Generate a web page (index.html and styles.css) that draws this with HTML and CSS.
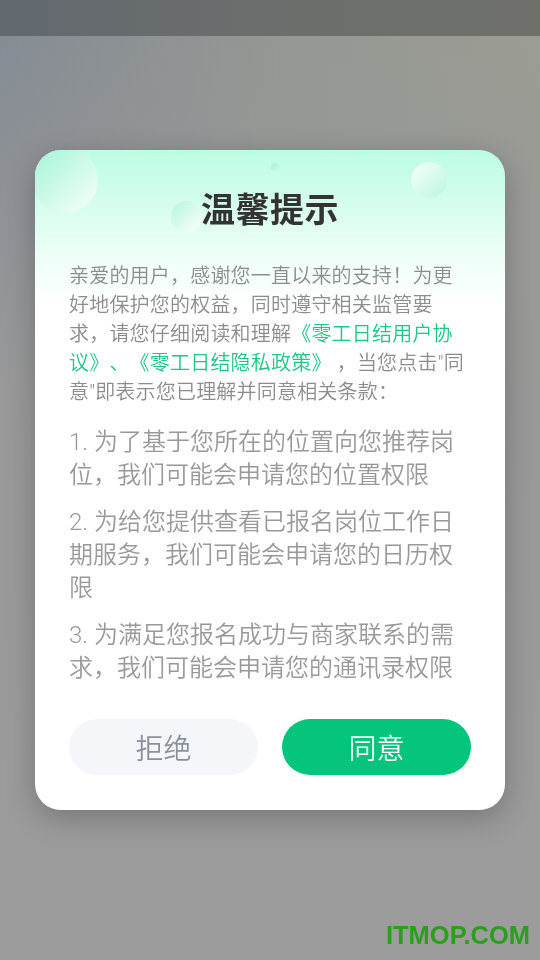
FILE: index.html
```html
<!DOCTYPE html>
<html lang="zh-CN">
<head>
  <meta charset="UTF-8" />
  <meta name="viewport" content="width=device-width, initial-scale=1.0" />
  <title>温馨提示</title>
  <link rel="stylesheet" href="styles.css">
</head>
<body>
  <div class="status-bar"></div>
  <div class="page"></div>

  <div class="mask">
    <div class="dialog">
      <span class="bubble bubble-lg"></span>
      <span class="bubble bubble-md"></span>
      <span class="bubble bubble-xs"></span>
      <span class="bubble bubble-rt"></span>

      <h1 class="dialog-title">温馨提示</h1>

      <p class="intro">亲爱的用户，感谢您一直以来的支持！为更好地保护您的权益，同时遵守相关监管要求，请您仔细阅读和理解<span class="link">《零工日结用户协</span><span class="link">议》、《零工日结隐私政策》</span> ，当您点击"同意"即表示您已理解并同意相关条款：</p>

      <ul class="terms">
        <li>1. 为了基于您所在的位置向您推荐岗位，我们可能会申请您的位置权限</li>
        <li>2. 为给您提供查看已报名岗位工作日期服务，我们可能会申请您的日历权限</li>
        <li>3. 为满足您报名成功与商家联系的需求，我们可能会申请您的通讯录权限</li>
      </ul>

      <div class="actions">
        <button class="btn btn-reject">拒绝</button>
        <button class="btn btn-agree">同意</button>
      </div>
    </div>
  </div>

  <div class="watermark">ITMOP.COM</div>
</body>
</html>
```

FILE: styles.css
```css
body {
  margin: 0;
  padding: 0;
  width: 540px;
  height: 960px;
  overflow: hidden;
  font-family: Roboto, "Noto Sans CJK SC", sans-serif;
  background-color: #9a9a9a;
}

.status-bar {
  height: 36px;
  background: linear-gradient(to right, #62696f, #6b6e6c 50%, #6f706a);
}

.page {
  height: 924px;
  background:
    linear-gradient(to bottom, rgba(154, 154, 154, 0) 0, #999999 360px, #9c9c9c 924px),
    linear-gradient(to right, #858c94, #959893 55%, #9b9c93);
}

.mask {
  position: fixed;
  top: 0;
  left: 0;
  right: 0;
  bottom: 0;
  display: flex;
  align-items: center;
  justify-content: center;
}

.dialog {
  position: relative;
  overflow: hidden;
  box-sizing: border-box;
  width: 470px;
  height: 660px;
  padding: 36px 34px 35px;
  border-radius: 26px;
  background: linear-gradient(to bottom, #bcfde2 0, #d6fded 55px, #effef8 110px, #ffffff 160px);
  box-shadow: 0 8px 30px rgba(0, 0, 0, 0.24);
}

.bubble {
  position: absolute;
  border-radius: 50%;
  background: linear-gradient(135deg, #a2f4d5, rgba(255, 255, 255, 0.85));
}

.bubble-lg {
  left: -3px;
  top: -3px;
  width: 66px;
  height: 66px;
}

.bubble-md {
  left: 136px;
  top: 51px;
  width: 31px;
  height: 31px;
  background: linear-gradient(135deg, #b4f6dd, rgba(255, 255, 255, 0.9));
}

.bubble-xs {
  left: 236px;
  top: 13px;
  width: 9px;
  height: 9px;
  background: linear-gradient(135deg, #9ff3d4, #d4fbec);
}

.bubble-rt {
  left: 376px;
  top: 12px;
  width: 36px;
  height: 36px;
  background: linear-gradient(135deg, rgba(255, 255, 255, 0.9), #b7f7de);
}

.dialog-title {
  position: relative;
  margin: 0 0 28px;
  font-size: 34px;
  line-height: 48px;
  font-weight: 700;
  text-align: center;
  color: #333333;
  letter-spacing: 0.5px;
}

.intro {
  margin: 0 0 19px;
  font-size: 20px;
  font-weight: 350;
  line-height: 29px;
  letter-spacing: 0.2px;
  color: #8c8c8c;
  text-spacing-trim: space-all;
}

.link {
  color: #1dc784;
}

.terms {
  list-style: none;
  margin: 0 0 34px;
  padding: 0;
}

.terms li {
  font-size: 24px;
  font-weight: 350;
  line-height: 33px;
  color: #999999;
  margin-bottom: 14px;
}

.terms li:last-child {
  margin-bottom: 0;
}

.actions {
  display: flex;
  gap: 24px;
}

.btn {
  flex: 1;
  height: 56px;
  border: none;
  border-radius: 28px;
  font-family: Roboto, "Noto Sans CJK SC", sans-serif;
  font-size: 28px;
  font-weight: 350;
  cursor: pointer;
}

.btn-reject {
  background-color: #f5f6fa;
  color: #8a909b;
}

.btn-agree {
  background-color: #05c47c;
  color: #ffffff;
}

.watermark {
  position: fixed;
  right: 10px;
  bottom: 10px;
  font-family: "Liberation Sans", Arial, sans-serif;
  font-size: 25.5px;
  font-weight: 700;
  color: #2b9f1d;
}
```
